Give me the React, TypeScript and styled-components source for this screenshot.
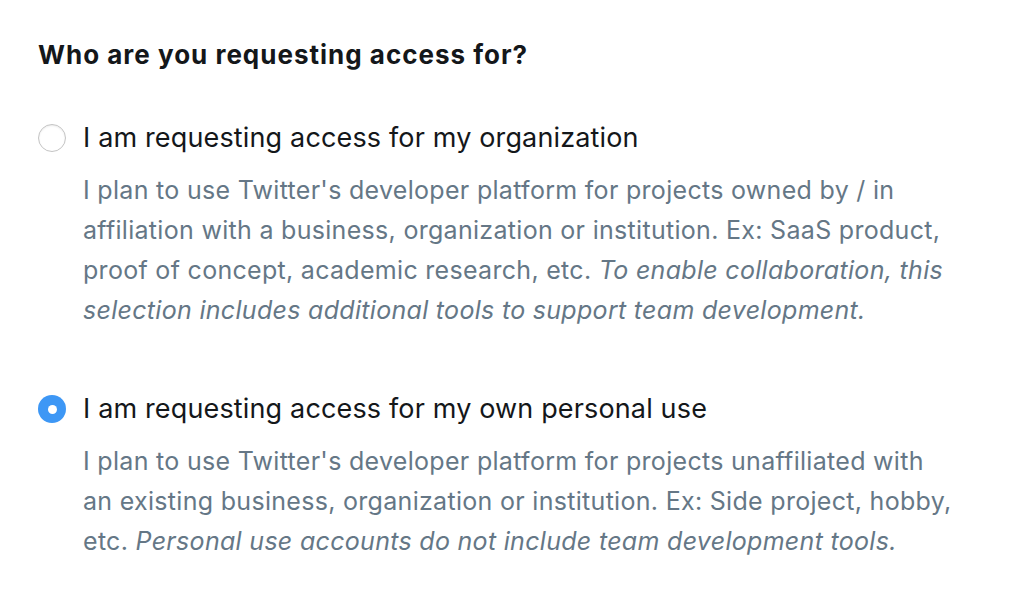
import React, { useState } from "react";
import styled, { createGlobalStyle } from "styled-components";

const Global = createGlobalStyle`
  html, body { margin: 0; padding: 0; background: #ffffff; }
  body { font-family: Inter, "Helvetica Neue", Arial, sans-serif; -webkit-font-smoothing: antialiased; }
`;

const Page = styled.div`
  padding: 38px 0 0 38px;
  width: 960px;
`;

const Heading = styled.h2`
  margin: 0;
  font-size: 26px;
  line-height: 34px;
  font-weight: 700;
  letter-spacing: 1px;
  color: #14171a;
`;

const Options = styled.div`
  display: flex;
  flex-direction: column;
  gap: 62px;
  margin-top: 49px;
`;

const Option = styled.label`
  display: grid;
  grid-template-columns: 28px 1fr;
  column-gap: 17px;
  cursor: pointer;
`;

const Radio = styled.span<{ $checked: boolean }>`
  box-sizing: border-box;
  width: 28px;
  height: 28px;
  border-radius: 50%;
  margin-top: 3px;
  display: flex;
  align-items: center;
  justify-content: center;
  background: ${(p) => (p.$checked ? "#3d97f5" : "#ffffff")};
  border: ${(p) => (p.$checked ? "none" : "1.5px solid #c4c4c4")};
  box-shadow: ${(p) => (p.$checked ? "none" : "inset 0 1px 2px rgba(0,0,0,0.08)")};
  &::after {
    content: "";
    display: ${(p) => (p.$checked ? "block" : "none")};
    width: 9px;
    height: 9px;
    border-radius: 50%;
    background: #ffffff;
  }
`;

const Body = styled.div`
  display: flex;
  flex-direction: column;
  gap: 15px;
`;

const Label = styled.div`
  font-size: 27px;
  line-height: 34px;
  letter-spacing: 0.15px;
  color: #14171a;
`;

const Desc = styled.p`
  margin: 0;
  font-size: 25px;
  line-height: 40px;
  letter-spacing: 0.3px;
  color: #657786;
  width: 872px;
  em { font-style: italic; }
`;

const options = [
  {
    id: "org",
    label: "I am requesting access for my organization",
    text: "I plan to use Twitter's developer platform for projects owned by / in affiliation with a business, organization or institution. Ex: SaaS product, proof of concept, academic research, etc.",
    italic: "To enable collaboration, this selection includes additional tools to support team development.",
  },
  {
    id: "personal",
    label: "I am requesting access for my own personal use",
    text: "I plan to use Twitter's developer platform for projects unaffiliated with an existing business, organization or institution. Ex: Side project, hobby, etc.",
    italic: "Personal use accounts do not include team development tools.",
  },
];

export default function App() {
  const [selected, setSelected] = useState("personal");
  return (
    <>
      <Global />
      <Page>
        <Heading>Who are you requesting access for?</Heading>
        <Options>
          {options.map((o) => (
            <Option key={o.id} onClick={() => setSelected(o.id)}>
              <Radio $checked={selected === o.id} />
              <Body>
                <Label>{o.label}</Label>
                <Desc>
                  {o.text} <em>{o.italic}</em>
                </Desc>
              </Body>
            </Option>
          ))}
        </Options>
      </Page>
    </>
  );
}
